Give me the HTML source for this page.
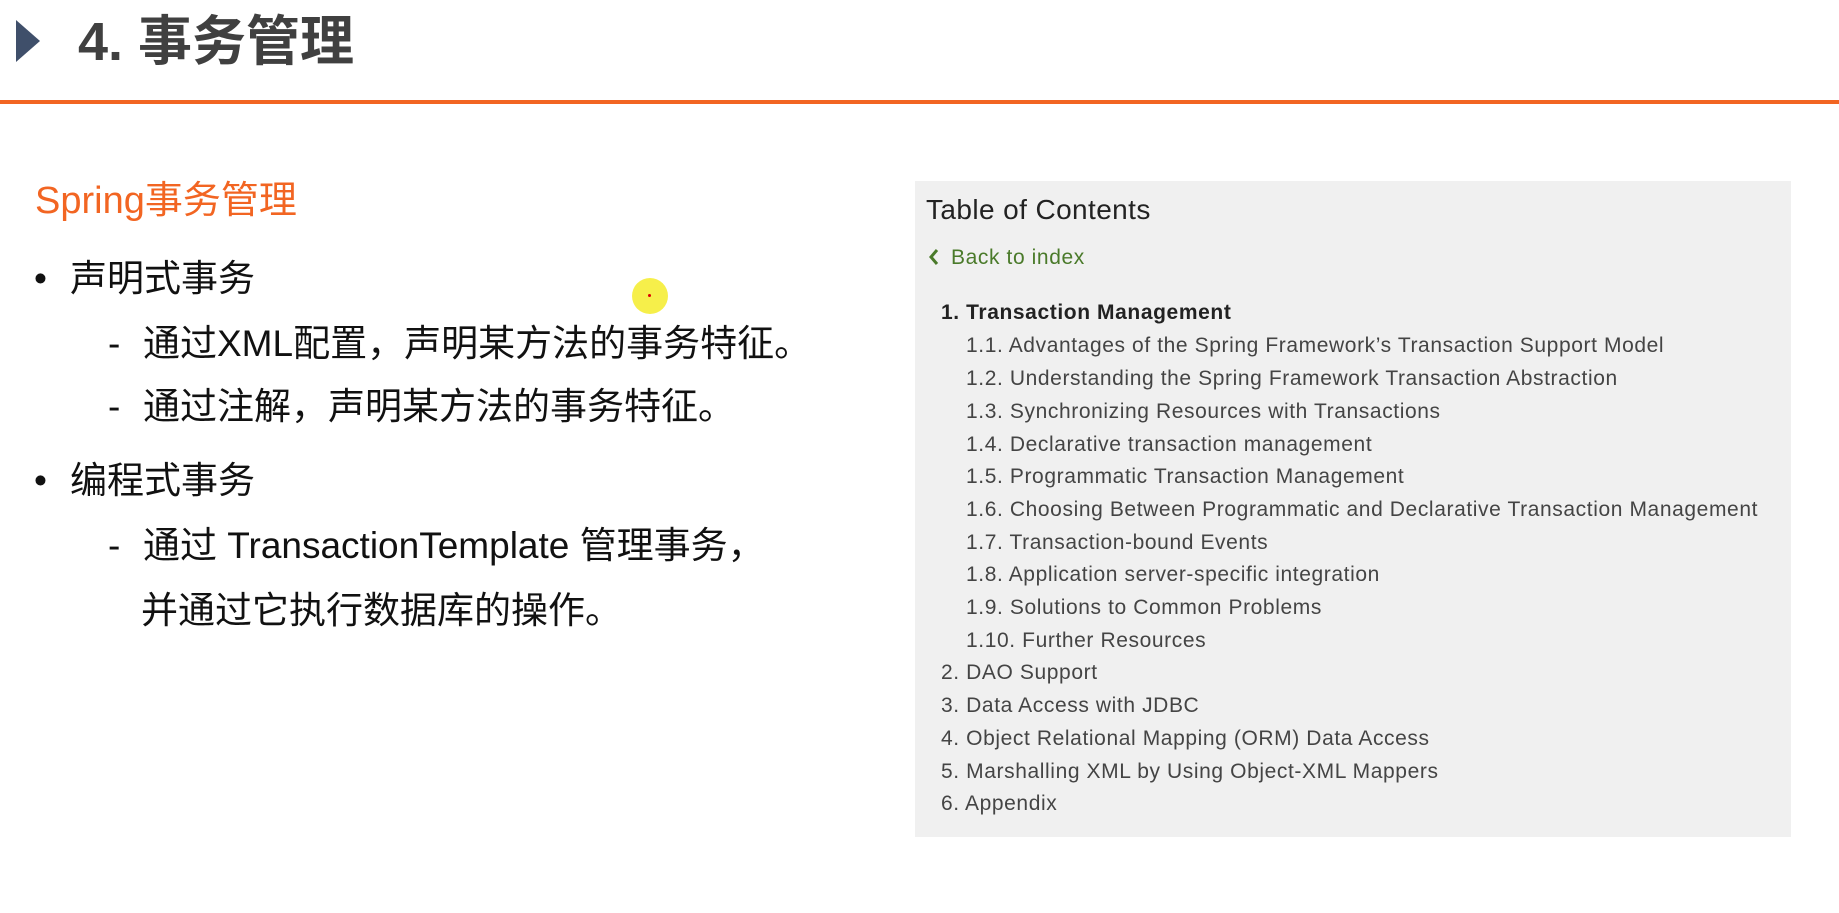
<!DOCTYPE html>
<html><head><meta charset="utf-8"><style>
body{margin:0;width:1839px;height:913px;background:#fff;position:relative;overflow:hidden;font-family:"Liberation Sans","Noto Sans CJK SC",sans-serif;}
.a{position:absolute;white-space:nowrap;}
.cn{font-family:"Liberation Sans","Noto Sans CJK SC",sans-serif;color:#111;font-size:37px;line-height:39px;}
.toc{position:absolute;left:915px;top:181px;width:876px;height:656px;background:#f0f0f0;}
.t{position:absolute;white-space:nowrap;font-size:21px;line-height:21px;color:#444;letter-spacing:0.6px;}
</style></head><body>
<svg class="a" style="left:16px;top:20px" width="26" height="42"><polygon points="0,0 24,21 0,42" fill="#3f4f6a"/></svg>
<div class="a" style="left:78px;top:13px;font-size:54px;line-height:58px;font-weight:bold;color:#404040;font-family:'Liberation Sans','Noto Sans CJK SC',sans-serif;">4. 事务管理</div>
<div class="a" style="left:0;top:100px;width:1839px;height:4px;background:#f26522;"></div>
<div class="a" style="left:35px;top:180px;font-size:38px;line-height:42px;color:#f26522;">Spring事务管理</div>
<div class="a cn" style="left:34px;top:259px;">•</div>
<div class="a cn" style="left:70px;top:259px;">声明式事务</div>
<div class="a cn" style="left:108px;top:324px;">-</div>
<div class="a cn" style="left:143px;top:324px;">通过XML配置，声明某方法的事务特征。</div>
<div class="a cn" style="left:108px;top:387px;">-</div>
<div class="a cn" style="left:143px;top:387px;">通过注解，声明某方法的事务特征。</div>
<div class="a cn" style="left:34px;top:461px;">•</div>
<div class="a cn" style="left:70px;top:461px;">编程式事务</div>
<div class="a cn" style="left:108px;top:526px;">-</div>
<div class="a cn" style="left:143px;top:526px;">通过 TransactionTemplate 管理事务，</div>
<div class="a cn" style="left:141px;top:591px;">并通过它执行数据库的操作。</div>
<div class="a" style="left:632px;top:278px;width:36px;height:36px;border-radius:50%;background:#f5ec2a;opacity:.85;"></div>
<div class="a" style="left:648px;top:294px;width:3px;height:3px;background:#d00;border-radius:50%;"></div>
<div class="toc"></div>
<div class="t" style="left:926px;top:196px;font-size:28px;line-height:28px;color:#222;letter-spacing:0.4px;">Table of Contents</div>
<svg class="a" style="left:928px;top:248px" width="12" height="18"><polyline points="9,2 3,9 9,16" fill="none" stroke="#4a7a2a" stroke-width="3"/></svg>
<div class="t" style="left:951px;top:247px;color:#4a7a2a;">Back to index</div>
<div class="t" style="left:941px;top:302px;font-weight:bold;color:#222;">1. Transaction Management</div>
<div class="t" style="left:966px;top:335px;">1.1. Advantages of the Spring Framework’s Transaction Support Model</div>
<div class="t" style="left:966px;top:368px;">1.2. Understanding the Spring Framework Transaction Abstraction</div>
<div class="t" style="left:966px;top:401px;">1.3. Synchronizing Resources with Transactions</div>
<div class="t" style="left:966px;top:434px;">1.4. Declarative transaction management</div>
<div class="t" style="left:966px;top:466px;">1.5. Programmatic Transaction Management</div>
<div class="t" style="left:966px;top:499px;">1.6. Choosing Between Programmatic and Declarative Transaction Management</div>
<div class="t" style="left:966px;top:532px;">1.7. Transaction-bound Events</div>
<div class="t" style="left:966px;top:564px;">1.8. Application server-specific integration</div>
<div class="t" style="left:966px;top:597px;">1.9. Solutions to Common Problems</div>
<div class="t" style="left:966px;top:630px;">1.10. Further Resources</div>
<div class="t" style="left:941px;top:662px;">2. DAO Support</div>
<div class="t" style="left:941px;top:695px;">3. Data Access with JDBC</div>
<div class="t" style="left:941px;top:728px;">4. Object Relational Mapping (ORM) Data Access</div>
<div class="t" style="left:941px;top:761px;">5. Marshalling XML by Using Object-XML Mappers</div>
<div class="t" style="left:941px;top:793px;">6. Appendix</div>
</body></html>
